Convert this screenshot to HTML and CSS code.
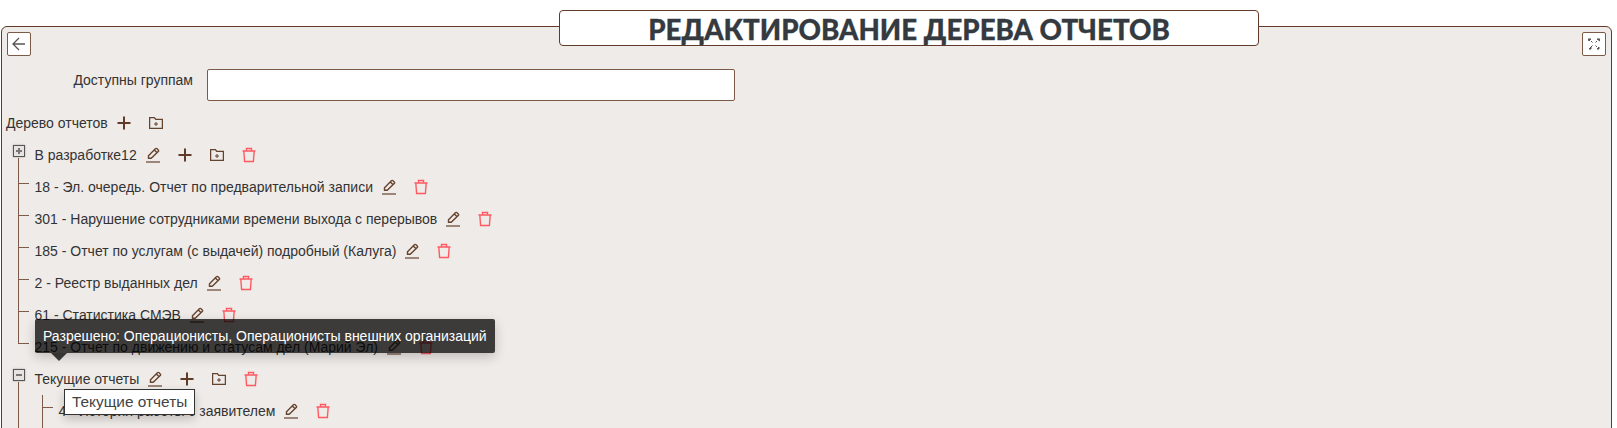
FILE: index.html
```html
<!DOCTYPE html>
<html lang="ru">
<head>
  <meta charset="UTF-8" />
  <title>Редактирование дерева отчетов</title>
  <link rel="stylesheet" href="styles.css">
</head>
<body>
  <svg class="defs" width="0" height="0">
    <symbol id="i-pencil" viewBox="0 0 14 16"><path d="M2.500 11.200V8.700L9.400 1.800c.5-.5 1.200-.5 1.700 0l1.100 1.100c.5.5.5 1.200 0 1.700l-7 6.600zM8.300 2.900l2.800 2.800" fill="none" stroke="currentColor" stroke-width="1.400"/><path d="M0 15h14" stroke="currentColor" stroke-width="1.200"/></symbol>
    <symbol id="i-plus" viewBox="0 0 14 14"><path d="M7 .5v13M.5 7h13" stroke="currentColor" stroke-width="2"/></symbol>
    <symbol id="i-folder" viewBox="0 0 14 12"><path d="M.6 11.400V.6h4.800l1.300 1.700h6.700v9.100z" fill="none" stroke="currentColor" stroke-width="1.300"/><path d="M7 5v4M5 7h4" stroke="currentColor" stroke-width="1"/></symbol>
    <symbol id="i-trash" viewBox="0 0 14 16"><path d="M.5 4h13M1.800 4l.8 10.500h8.800l.8-10.500M4.500 4V1.500h5V4" fill="none" stroke="currentColor" stroke-width="1.400"/></symbol>
  </svg>

  <div class="page">
    <h1 class="title-box">Редактирование дерева отчетов</h1>

    <div class="panel">
      <div class="toolbar">
        <button class="square-btn">
          <svg width="14" height="14" viewBox="0 0 14 14"><path d="M13 7H1.500M7 1 1 7l6 6" fill="none" stroke="#555" stroke-width="1.300"/></svg>
        </button>
        <button class="square-btn">
          <svg width="12" height="12" viewBox="0 0 12 12"><path d="M0 1h3L1 3zM12 1v2L9 1zM1 11l2-2 0 2zM11 11H9l2-2zM3 3l1.500 1.500M9 3 7.500 4.500M3 9l1.500-1.500M9 9 7.500 7.500" fill="#555" stroke="#555" stroke-width="1"/></svg>
        </button>
      </div>

      <div class="form-row">
        <label class="form-label">Доступны группам</label>
        <input class="form-input" type="text" />
      </div>

      <div class="tree-head">
        <span>Дерево отчетов</span>
        <span class="act act-plus"><svg width="14" height="14"><use href="#i-plus"/></svg></span>
        <span class="act"><svg width="14" height="12"><use href="#i-folder"/></svg></span>
      </div>

      <div class="tree-group">
        <div class="root-row">
          <span class="toggle"><i class="bar"></i><i class="bar bar-v"></i></span>
          <span>В разработке12</span>
          <span class="act"><svg width="14" height="16"><use href="#i-pencil"/></svg></span>
          <span class="act act-plus"><svg width="14" height="14"><use href="#i-plus"/></svg></span>
          <span class="act"><svg width="14" height="12"><use href="#i-folder"/></svg></span>
          <span class="act act-del"><svg width="14" height="16"><use href="#i-trash"/></svg></span>
        </div>
        <ul class="children">
          <li class="leaf"><i class="tick"></i><span>18 - Эл. очередь. Отчет по предварительной записи</span><span class="act"><svg width="14" height="16"><use href="#i-pencil"/></svg></span><span class="act act-del"><svg width="14" height="16"><use href="#i-trash"/></svg></span></li>
          <li class="leaf"><i class="tick"></i><span>301 - Нарушение сотрудниками времени выхода с перерывов</span><span class="act"><svg width="14" height="16"><use href="#i-pencil"/></svg></span><span class="act act-del"><svg width="14" height="16"><use href="#i-trash"/></svg></span></li>
          <li class="leaf"><i class="tick"></i><span>185 - Отчет по услугам (с выдачей) подробный (Калуга)</span><span class="act"><svg width="14" height="16"><use href="#i-pencil"/></svg></span><span class="act act-del"><svg width="14" height="16"><use href="#i-trash"/></svg></span></li>
          <li class="leaf"><i class="tick"></i><span>2 - Реестр выданных дел</span><span class="act"><svg width="14" height="16"><use href="#i-pencil"/></svg></span><span class="act act-del"><svg width="14" height="16"><use href="#i-trash"/></svg></span></li>
          <li class="leaf"><i class="tick"></i><span>61 - Статистика СМЭВ</span><span class="act"><svg width="14" height="16"><use href="#i-pencil"/></svg></span><span class="act act-del"><svg width="14" height="16"><use href="#i-trash"/></svg></span></li>
          <li class="leaf last"><i class="tick"></i><span>215 - Отчет по движению и статусам дел (Марий Эл)</span><span class="act"><svg width="14" height="16"><use href="#i-pencil"/></svg></span><span class="act act-del"><svg width="14" height="16"><use href="#i-trash"/></svg></span></li>
        </ul>
      </div>

      <div class="tree-group">
        <div class="root-row">
          <span class="toggle"><i class="bar"></i></span>
          <span>Текущие отчеты</span>
          <span class="act"><svg width="14" height="16"><use href="#i-pencil"/></svg></span>
          <span class="act act-plus"><svg width="14" height="14"><use href="#i-plus"/></svg></span>
          <span class="act"><svg width="14" height="12"><use href="#i-folder"/></svg></span>
          <span class="act act-del"><svg width="14" height="16"><use href="#i-trash"/></svg></span>
        </div>
        <ul class="children">
          <li>
            <ul class="nested">
              <li class="leaf"><i class="tick"></i><span>4 - История работы с заявителем</span><span class="act"><svg width="14" height="16"><use href="#i-pencil"/></svg></span><span class="act act-del"><svg width="14" height="16"><use href="#i-trash"/></svg></span></li>
            </ul>
          </li>
        </ul>
      </div>
    </div>

    <div class="tip-dark">Разрешено: Операционисты, Операционисты внешних организаций</div>
    <div class="tip-light">Текущие отчеты</div>
  </div>
</body>
</html>
```

FILE: styles.css
```css
html, body { margin: 0; padding: 0; height: 428px; overflow: hidden; background: #fff; }
body { font-family: "Liberation Sans", sans-serif; font-size: 14px; color: #333; }
.defs { position: absolute; }
.page { position: relative; height: 402px; padding: 26px 5px 0 1px; overflow: hidden; }

.title-box {
  position: absolute; left: 559px; top: 10px; width: 698px; height: 34px; margin: 0;
  background: #fff; border: 1px solid #5f3b28; border-radius: 4px;
  font-family: "Lato", "Noto Sans", sans-serif; font-weight: 900; font-size: 27.7px; line-height: 37px;
  text-align: center; text-transform: uppercase; color: #343a40; -webkit-text-stroke: .3px #343a40;
}

.panel {
  height: 460px; background: #efebe8; border: 1px solid #5f3b28; border-radius: 6px;
}
.toolbar { display: flex; justify-content: space-between; padding: 5px 5px 0 5px; }
.square-btn {
  width: 24px; height: 24px; padding: 0; display: flex; align-items: center; justify-content: center;
  background: #fff; border: 1px solid #7d5a48; border-radius: 2px;
}

.form-row { display: flex; align-items: flex-start; margin-top: 13px; }
.form-label { width: 205px; padding-top: 3px; padding-right: 14px; text-align: right; box-sizing: border-box; line-height: 16px; flex: none; }
.form-input { width: 528px; height: 32px; margin: 0; box-sizing: border-box; background: #fff; border: 1px solid #7d5a48; border-radius: 2px; }

.tree-head { display: flex; align-items: center; height: 32px; margin-top: 6px; padding-left: 4px; }
.act { display: flex; align-items: center; justify-content: center; width: 32px; height: 32px; color: #64432f; flex: none; }
.act-plus { color: #5f3b28; }
.act-del { color: #ff5a62; }

.root-row { display: flex; align-items: center; height: 32px; padding-left: 11px; }
.toggle {
  position: relative; align-self: flex-start; width: 12px; height: 12px; margin: 6px 9.5px 0 0; flex: none;
  background: #e6e3e0; border: 1px solid #555; box-sizing: border-box; box-shadow: 0 0 2px rgba(0,0,0,.3);
}
.bar { position: absolute; left: 2px; top: 4px; width: 6px; height: 2px; background: #777; }
.bar-v { left: 4px; top: 2px; width: 2px; height: 6px; }

ul { list-style: none; margin: 0; padding: 0; }
.children { display: flow-root; margin: -13px 0 19px 16px; padding-top: 13px; border-left: 1px solid #7d5a48; }
.nested { margin-left: 23px; padding-bottom: 20px; border-left: 1px solid #7d5a48; }
.leaf { display: flex; align-items: center; height: 32px; }
.leaf.last { margin-bottom: -19px; }
.tick { align-self: flex-start; width: 10px; height: 1px; margin: 12px 5.5px 0 0; background: #7d5a48; flex: none; }

.tip-dark {
  position: absolute; left: 35px; top: 319px; padding: 0 8px; height: 34px; line-height: 34px; border-radius: 2px;
  background: rgba(0,0,0,.75); color: #fff; box-shadow: 0 4px 12px rgba(0,0,0,.2); white-space: nowrap;
}
.tip-dark::after {
  content: ""; position: absolute; left: 16px; top: 100%;
  border: 8px solid transparent; border-top-color: rgba(0,0,0,.75); border-bottom: 0;
}
.tip-light {
  position: absolute; left: 64px; top: 389px; padding: 0 7px; height: 24px; line-height: 24px; font-size: 15.4px;
  background: #fff; border: 1px solid #333; color: #444; box-shadow: 0 4px 10px rgba(0,0,0,.2); white-space: nowrap;
}
```
